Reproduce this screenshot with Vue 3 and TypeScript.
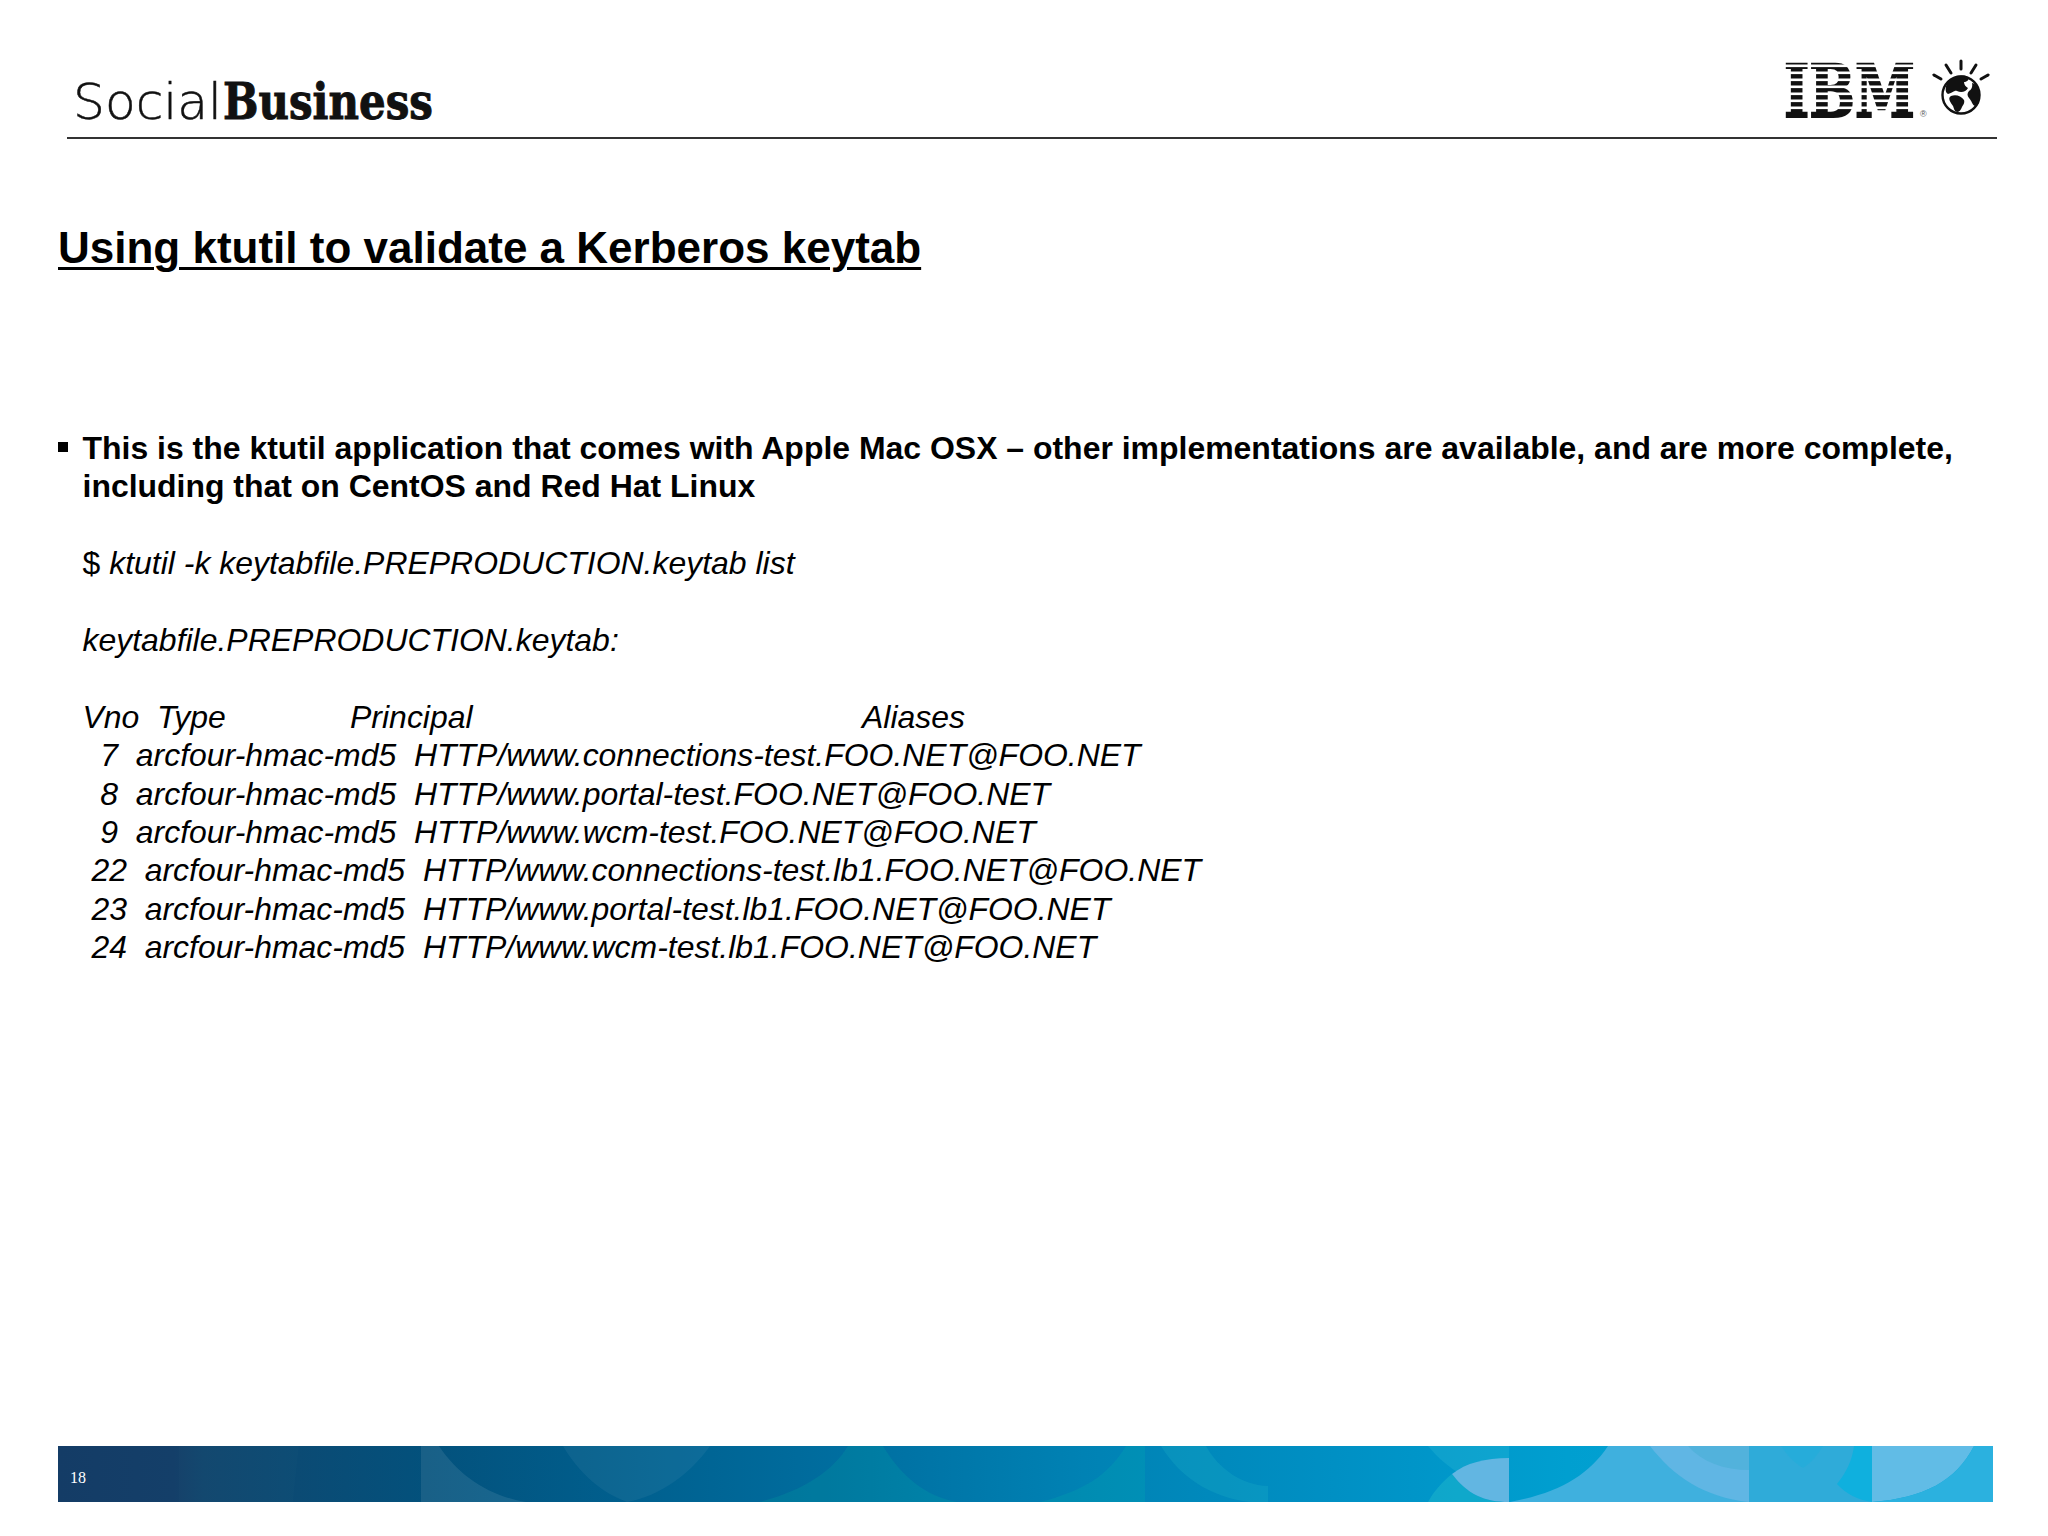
<script setup lang="ts">
const headerRow = 'Vno  Type              Principal                                            Aliases'
const rows: string[] = [
  '  7  arcfour-hmac-md5  HTTP/www.connections-test.FOO.NET@FOO.NET',
  '  8  arcfour-hmac-md5  HTTP/www.portal-test.FOO.NET@FOO.NET',
  '  9  arcfour-hmac-md5  HTTP/www.wcm-test.FOO.NET@FOO.NET',
  ' 22  arcfour-hmac-md5  HTTP/www.connections-test.lb1.FOO.NET@FOO.NET',
  ' 23  arcfour-hmac-md5  HTTP/www.portal-test.lb1.FOO.NET@FOO.NET',
  ' 24  arcfour-hmac-md5  HTTP/www.wcm-test.lb1.FOO.NET@FOO.NET',
]
const stripes: number[] = [10.5, 17.5, 24.5, 31.5, 38.5, 45.5, 52.5]
</script>

<template>
  <div class="slide">
    <header class="head">
      <svg class="wordmark" width="380" height="90" viewBox="0 0 380 90">
        <text class="social" x="6" y="71" textLength="149" lengthAdjust="spacingAndGlyphs">Social</text>
        <text class="business" x="156" y="71" textLength="210" lengthAdjust="spacingAndGlyphs">Business</text>
      </svg>
      <svg class="ibm" width="216" height="100" viewBox="0 0 216 100">
        <g transform="translate(0 10)">
          <text class="ibm-text" x="0" y="69" textLength="131" lengthAdjust="spacingAndGlyphs">IBM</text>
          <rect v-for="s in stripes" :key="s" x="-3" :y="s + 6" width="138" height="2.6" fill="#fff" />
          <text class="reg" x="136" y="69">®</text>
          <g transform="translate(2 0)">
            <g stroke="#111" stroke-width="3" stroke-linecap="round">
              <line x1="175" y1="13" x2="175" y2="21" />
              <line x1="160" y1="17" x2="165" y2="25" />
              <line x1="190" y1="17" x2="185" y2="25" />
              <line x1="148" y1="27" x2="155" y2="31" />
              <line x1="202" y1="27" x2="195" y2="31" />
            </g>
            <circle cx="175" cy="47" r="18.5" fill="#fff" stroke="#111" stroke-width="2.4" />
            <path fill="#111" d="M162 33c6-5 14-7 20-4 2 3-2 5-4 5 0 3 2 5 4 6-2 4-7 5-11 3-3-1-4 2-9 3-4-2-2-9 0-13Z" />
            <path fill="#111" d="M165 48c5-2 10 0 13 4 1 3-1 5-2 7-1 3-3 5-5 5-3-1-3-4-4-6-2-3-6-8-2-10Z" />
            <path fill="#111" d="M186 35c5 1 8 7 8 12 0 6-2 11-5 11-3-1-3-5-6-8-2-2-2-5 0-7 2-1 4-4 3-8Z" />
          </g>
        </g>
      </svg>
    </header>

    <h1 class="title">Using ktutil to validate a Kerberos keytab</h1>

    <main class="content">
      <span class="bullet"></span>
      <div class="text">
        <p class="lead">This is the ktutil application that comes with Apple Mac OSX – other implementations are available, and are more complete, including that on CentOS and Red Hat Linux</p>
        <p class="line gap">$ <em>ktutil -k keytabfile.PREPRODUCTION.keytab list</em></p>
        <p class="line gap"><em>keytabfile.PREPRODUCTION.keytab:</em></p>
        <p class="line gap"><em>{{ headerRow }}</em></p>
        <p v-for="r in rows" :key="r" class="line"><em>{{ r }}</em></p>
      </div>
    </main>

    <footer class="banner">
      <svg class="art" width="1935" height="56" viewBox="0 0 1935 56" preserveAspectRatio="none">
        <defs>
          <linearGradient id="base" x1="0" x2="1" y1="0" y2="0">
            <stop offset="0" stop-color="#143c66" />
            <stop offset="0.06" stop-color="#143f69" />
            <stop offset="0.075" stop-color="#11466e" />
            <stop offset="0.19" stop-color="#03517c" />
            <stop offset="0.3" stop-color="#00608f" />
            <stop offset="0.42" stop-color="#0070a2" />
            <stop offset="0.53" stop-color="#0082b4" />
            <stop offset="0.66" stop-color="#0090c4" />
            <stop offset="0.78" stop-color="#009fd0" />
            <stop offset="1" stop-color="#10a8da" />
          </linearGradient>
        </defs>
        <rect width="1935" height="56" fill="url(#base)" />
        <path fill="#fff" fill-opacity=".012" d="M121 0h120l-6 56H121Z" />
        <path fill="#fff" fill-opacity=".09" d="M363 0h18c20 30 50 50 87 56H363Z" />
        <path fill="#fff" fill-opacity=".05" d="M505 0h147c-20 28-50 50-83 56C540 45 520 25 505 0Z" />
        <path fill="#0ea" fill-opacity=".1" d="M790 0h35c18 30 42 50 74 56H701C745 45 775 25 790 0Z" />
        <path fill="#0ea" fill-opacity=".1" d="M1068 0h19v56H982C1025 45 1050 30 1068 0Z" />
        <path fill="#3cc" fill-opacity=".16" d="M1103 0h45c12 22 35 39 62 40v16h-18c-40-5-70-25-89-56Z" />
        <path fill="#4cd" fill-opacity=".2" d="M1370 0h81v40c-35 0-60-15-81-40Z" />
        <path fill="#3cc" fill-opacity=".3" d="M1394 28c-10 8-18 17-24 28h81c-25 0-42-8-57-28Z" />
        <path fill="#62b6e2" d="M1451 40v16c-25 0-42-8-57-28 14-11 33-16 57-16Z" />
        <path fill="#3fb0de" d="M1550 0h141v56H1452C1500 47 1530 30 1550 0Z" />
        <path fill="#60b6e4" d="M1592 0h99v56c-45-5-75-25-99-56Z" />
        <path fill="#52b2dc" d="M1630 0h61v24c-25 0-47-8-61-24Z" />
        <path fill="#2fabd9" d="M1691 0h123v56h-123Z" />
        <path fill="#0fb0de" d="M1796 0h18v56c-14-2-26-8-35-18 9-11 15-23 17-38Z" />
        <path fill="#22aedb" fill-opacity=".6" d="M1723 0h42c-6 10-12 17-20 22-10-6-16-13-22-22Z" />
        <path fill="#61bce6" d="M1814 0h102c-18 35-50 52-102 56Z" />
        <path fill="#2bb1df" d="M1916 0h19v56h-121c52-4 84-21 102-56Z" />
      </svg>
      <span class="num">18</span>
    </footer>
  </div>
</template>

<style>
html, body { margin: 0; background: #fff; }
</style>

<style scoped>
.slide {
  width: 2048px;
  height: 1536px;
  display: flex;
  flex-direction: column;
  box-sizing: border-box;
  padding-bottom: 34px;
  background: #fff;
  color: #000;
  font-family: "Liberation Sans", Arial, sans-serif;
  overflow: hidden;
}
.head {
  margin-left: 67px;
  width: 1930px;
  height: 139px;
  box-sizing: border-box;
  border-bottom: 2px solid #333;
  display: flex;
  justify-content: space-between;
  align-items: flex-end;
}
.wordmark { display: block; margin-bottom: -1px; }
.ibm { display: block; margin-bottom: -1px; margin-right: -3px; }
.social {
  font-family: "DejaVu Sans", sans-serif;
  font-weight: 200;
  font-size: 50px;
  fill: #111;
  stroke: #111;
  stroke-width: 0.5px;
}
.business {
  font-family: "DejaVu Serif", serif;
  font-weight: 700;
  font-size: 50px;
  fill: #111;
  stroke: #111;
  stroke-width: 1px;
}
.ibm-text {
  font-family: "DejaVu Serif", serif;
  font-weight: 700;
  font-size: 73px;
  fill: #111;
  stroke: #111;
  stroke-width: 2px;
}
.reg { font-family: "Liberation Sans", sans-serif; font-size: 9px; fill: #555; }
.title {
  margin: 83px 0 0 58px;
  font-size: 44px;
  line-height: 52px;
  font-weight: 700;
  text-decoration: underline;
  text-decoration-thickness: 3px;
  text-underline-offset: 4px;
}
.content {
  flex: 1;
  margin: 155px 0 0 58px;
  width: 1900px;
  display: flex;
  align-items: flex-start;
  gap: 15px;
}
.bullet {
  width: 10px;
  height: 10px;
  margin-top: 13px;
  flex: none;
  background: #000;
}
.text { flex: 1; font-size: 31.96px; line-height: 38.4px; margin-left: -0.5px; }
.lead { margin: 0; font-weight: 700; }
.line { margin: 0; white-space: pre; }
.gap { margin-top: 38.4px; }
.banner {
  position: relative;
  margin-left: 58px;
  width: 1935px;
  height: 56px;
  display: flex;
  align-items: center;
}
.art { position: absolute; inset: 0; display: block; }
.num {
  position: relative;
  margin-left: 12px;
  top: 4px;
  font-family: "Liberation Serif", serif;
  font-size: 16px;
  color: #fff;
}
</style>
